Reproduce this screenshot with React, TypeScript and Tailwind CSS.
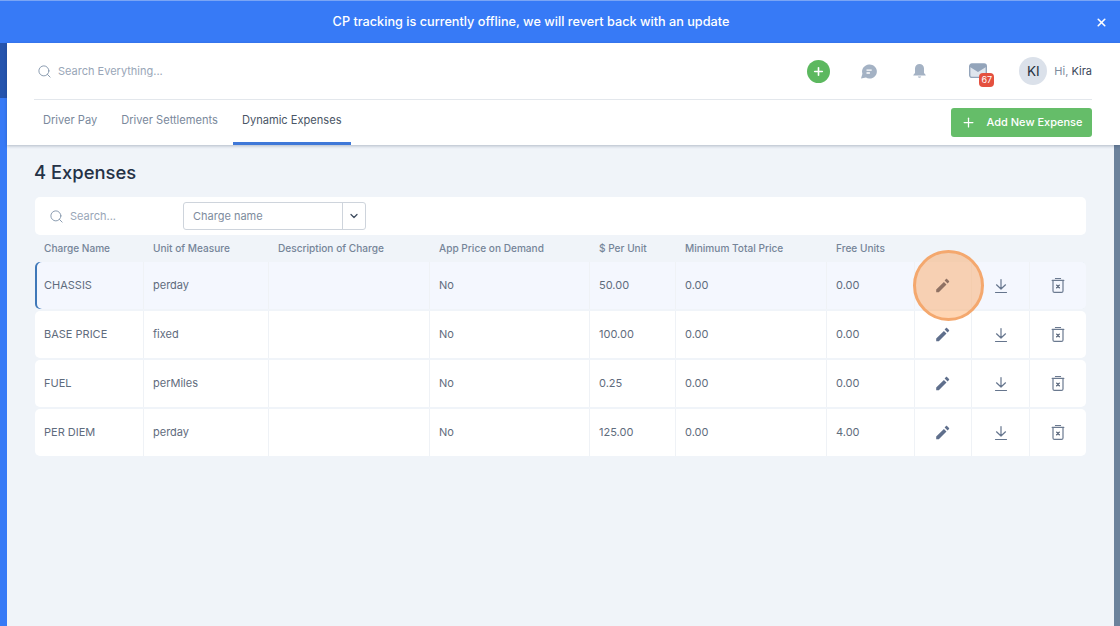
import React from 'react';
import { Search, ChevronDown, Plus, X } from 'lucide-react';

const columns = ['Charge Name', 'Unit of Measure', 'Description of Charge', 'App Price on Demand', '$ Per Unit', 'Minimum Total Price', 'Free Units'];

const expenses = [
  { name: 'CHASSIS', unit: 'perday', price: '50.00', free: '0.00' },
  { name: 'BASE PRICE', unit: 'fixed', price: '100.00', free: '0.00' },
  { name: 'FUEL', unit: 'perMiles', price: '0.25', free: '0.00' },
  { name: 'PER DIEM', unit: 'perday', price: '125.00', free: '4.00' },
];

const rowGrid = 'grid grid-cols-[109px_125px_161px_160px_86px_151px_88px_57px_58px_56px]';

const PencilIcon = () => (
  <svg width="16" height="16" viewBox="0 0.6 16 16" fill="#5f6f8c">
    <path d="M1.2 12.2v2.6h2.6l7.7-7.7-2.6-2.6zM14 4.6c.3-.3.3-.7 0-1l-2-2c-.3-.3-.7-.3-1 0L9.6 3l3 3z" />
  </svg>
);

const DownloadIcon = () => (
  <svg width="14" height="16" viewBox="0 0 14 16" fill="none" stroke="#65758d" strokeWidth="1.2" strokeLinecap="round" strokeLinejoin="round">
    <path d="M7 1.5v9.5M2.5 6.8 7 11l4.5-4.2M1.5 14.5h11" />
  </svg>
);

const TrashIcon = () => (
  <svg width="14" height="16" viewBox="0 0.6 14 16" fill="none" stroke="#6b7a90" strokeWidth="1.2" strokeLinecap="round" strokeLinejoin="round">
    <path d="M4.5 1h5M1.2 3h11.6M2 3v10.5c0 .8.6 1.5 1.5 1.5h7c.9 0 1.5-.7 1.5-1.5V3" />
    <path stroke="#4c5a70" strokeWidth="1.3" d="M5.7 7.7l2.6 2.6M8.3 7.7l-2.6 2.6" />
  </svg>
);

const App: React.FC = () => {
  return (
    <div className="relative flex h-[626px] w-[1120px] flex-col overflow-hidden bg-[#f0f4f9] font-['Inter',sans-serif]">
      {/* offline banner */}
      <div className="relative flex h-[43px] shrink-0 items-center justify-center border-t border-[#7aa5f5] bg-[#377af6] pr-[58px] text-[12.7px] font-medium text-white">
        CP tracking is currently offline, we will revert back with an update
        <X size={13} strokeWidth={3} className="absolute right-[12px] top-[15px]" />
      </div>

      <div className="flex min-h-0 flex-1">
        {/* collapsed sidebar */}
        <div className="w-[7px] shrink-0 bg-[#377af6]">
          <div className="h-[55px] bg-[#2554ad]" />
        </div>

        <div className="flex min-w-0 flex-1 flex-col">
          <header className="z-10 h-[102px] shrink-0 bg-white pl-[27px] pr-[28px] shadow-[0_1px_3px_rgba(30,50,80,0.3)]">
            <div className="flex h-[57px] items-center border-b border-[#e3e7ec] pl-[3px]">
              <Search size={15} strokeWidth={1.5} className="text-[#8496ac]" />
              <span className="ml-[6px] text-[11px] text-[#99a6b7]">Search Everything...</span>
              <div className="ml-auto flex items-center">
                <span className="mr-[30px] flex h-[23px] w-[23px] items-center justify-center rounded-full bg-[#5cb85f]">
                  <Plus size={13} strokeWidth={3} className="text-white" />
                </span>
                <svg className="mr-[35px]" width="17" height="17" viewBox="0 0 17 17">
                  <path fill="#a4b2c4" d="M9 1.6a7 7 0 0 0-6.6 9.2L1 15.6l5-1.2A7 7 0 1 0 9 1.6z" />
                  <path stroke="#fff" strokeWidth="1.3" d="M6.5 7.2h5.2M6.5 10h3.4" />
                </svg>
                <svg className="mr-[42px]" width="15" height="16" viewBox="0 0 15 16">
                  <path fill="#a4b2c4" d="M7.5 1a4.5 4.5 0 0 0-4.5 4.6V10L1.3 12v.6h12.4V12L12 10V5.6A4.5 4.5 0 0 0 7.5 1zM5.8 13.5a1.8 1.8 0 0 0 3.4 0z" />
                </svg>
                <span className="relative mr-[32px] h-[16px] w-[18px]">
                  <svg width="18" height="16" viewBox="0 0 18 16">
                    <rect x="0.7" y="1" width="16.6" height="13.4" rx="2.2" fill="#dfe5ed" stroke="#93a4ba" strokeWidth="1.4" />
                    <path fill="#93a4ba" d="M1 2.5A2 2 0 0 1 3 1h12a2 2 0 0 1 2 1.5V4L9 9 1 4z" />
                  </svg>
                  <span className="absolute left-[10px] top-[10px] flex h-[14px] w-[15px] items-center justify-center rounded-[4px] bg-[#e4503f] text-[9px] text-white">67</span>
                </span>
                <span className="flex h-[28px] w-[28px] items-center justify-center rounded-full bg-[#dbe1ea] text-[13.5px] text-[#25303f]">KI</span>
                <span className="ml-[7px] text-[11px] text-[#7d8b9d]">Hi, <span className="text-[#39465a]">Kira</span></span>
              </div>
            </div>
            <div className="flex h-[45px] items-start justify-between">
              <nav className="flex items-start text-[11.1px]">
                <span className="flex h-[45px] items-center px-[9px] pb-[4px] text-[#7a899c]">Driver Pay</span>
                <span className="ml-[6px] flex h-[45px] items-center px-[9px] pb-[4px] text-[#7a899c]">Driver Settlements</span>
                <span className="ml-[6px] flex h-[45px] items-center border-b-[3px] border-[#3f78d8] px-[9px] pb-[1px] text-[#4a5666]">Dynamic Expenses</span>
              </nav>
              <button className="mt-[8px] flex h-[29px] w-[141px] items-center justify-center gap-[11px] rounded-[3px] bg-[#65bd69] text-[11px] font-medium text-white">
                <Plus size={15} strokeWidth={2} />
                Add New Expense
              </button>
            </div>
          </header>

          <div className="flex min-h-0 flex-1">
            <main className="min-w-0 flex-1 px-[28px]">
              <h1 className="mt-[16px] -ml-[1px] text-[18.4px] font-medium leading-[22px] text-[#253246]">4 Expenses</h1>
              <div className="mt-[14px] flex h-[38px] items-center rounded-[5px] bg-white pl-[14px]">
                <Search size={15} strokeWidth={1.5} className="text-[#8496ac]" />
                <span className="ml-[6px] w-[113px] text-[11px] text-[#99a6b7]">Search...</span>
                <div className="flex h-[28px] w-[183px] rounded-[3px] border border-[#ced4dc] text-[11px] text-[#7d8b9d]">
                  <span className="flex w-[159px] items-center border-r border-[#ced4dc] pl-[9px]">Charge name</span>
                  <span className="flex flex-1 items-center justify-center">
                    <ChevronDown size={12} strokeWidth={2.5} className="text-[#3f4d60]" />
                  </span>
                </div>
              </div>

              <div className={`${rowGrid} h-[27px] items-center text-[10.1px] font-medium text-[#758498]`}>
                {columns.map((col) => (
                  <span key={col} className="pl-[9px]">{col}</span>
                ))}
              </div>

              <div className="flex flex-col gap-[2px]">
                {expenses.map((row, i) => (
                  <div
                    key={row.name}
                    className={`${rowGrid} h-[47px] rounded-[5px] text-[11px] text-[#5f6c7d] ${i === 0 ? 'bg-[#f4f7fe] shadow-[inset_2px_0_0_#3f78b8]' : 'bg-white'}`}
                  >
                    <span className="flex items-center border-r border-[#eff2f6] pl-[9px]">{row.name}</span>
                    <span className="flex items-center border-r border-[#eff2f6] pl-[9px]">{row.unit}</span>
                    <span className="flex items-center border-r border-[#eff2f6] pl-[9px]"></span>
                    <span className="flex items-center border-r border-[#eff2f6] pl-[9px]">No</span>
                    <span className="flex items-center border-r border-[#eff2f6] pl-[9px]">{row.price}</span>
                    <span className="flex items-center border-r border-[#eff2f6] pl-[9px]">0.00</span>
                    <span className="flex items-center border-r border-[#eff2f6] pl-[9px]">{row.free}</span>
                    <span className="flex items-center justify-center border-r border-[#eff2f6]"><PencilIcon /></span>
                    <span className="flex items-center justify-center border-r border-[#eff2f6]"><DownloadIcon /></span>
                    <span className="flex items-center justify-center"><TrashIcon /></span>
                  </div>
                ))}
              </div>
            </main>
            {/* scrollbar */}
            <div className="w-[6px] shrink-0 bg-[#6c829c]" />
          </div>
        </div>
      </div>

      {/* click highlight */}
      <div className="absolute left-[913px] top-[250px] h-[71px] w-[71px] rounded-full border-[3px] border-[#f4a86e] bg-[#ff7807]/30" />
    </div>
  );
};

export default App;
